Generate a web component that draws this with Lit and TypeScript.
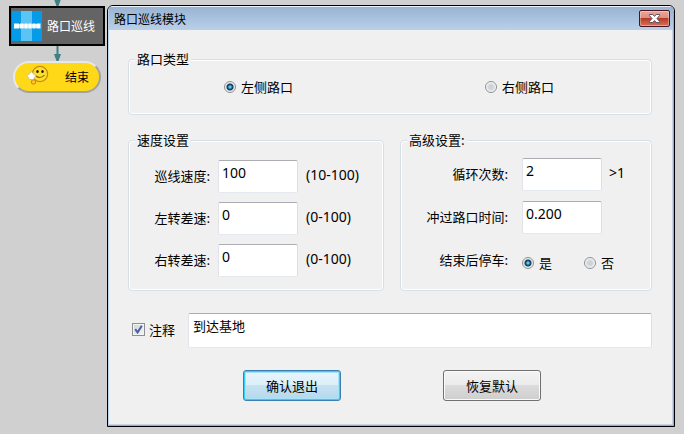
import { LitElement, html, css, svg } from "lit";
import { customElement, state } from "lit/decorators.js";

const sharedText = css`
  :host {
    font-family: "Noto Sans CJK SC", "Noto Sans", sans-serif;
    color: #000;
  }
`;

@customElement("flow-track")
export class FlowTrack extends LitElement {
  static styles = [
    sharedText,
    css`
      :host {
        display: flex;
        flex-direction: column;
        align-items: center;
        padding: 0 2px 0 9px;
        font-size: 12px;
        line-height: 16px;
      }
      svg {
        display: block;
      }
      .node {
        box-sizing: border-box;
        align-self: stretch;
        display: flex;
        align-items: center;
        gap: 5px;
        height: 40px;
        padding: 0 1px;
        border: 2px solid #000;
        background: #646464;
        color: #fff;
        white-space: nowrap;
      }
      .end {
        box-sizing: border-box;
        display: flex;
        align-items: center;
        gap: 16px;
        width: 88px;
        height: 32px;
        padding: 0 0 0 12px;
        border: 2px solid;
        border-color: #e8e8e8 #a2a2a2 #a2a2a2 #e8e8e8;
        border-radius: 16px;
        background: #ffd817;
      }
      .face {
        margin-bottom: 5px;
      }
    `,
  ];

  private arrow(height: number) {
    return svg`<svg width="9" height=${height} viewBox=${`0 ${16 - height} 9 ${height}`} aria-hidden="true">
      <path d="M4.5 0V10" stroke="#3f8080" stroke-width="2" />
      <path d="M1 9H8L5.5 16H3.5Z" fill="#3f8080" />
    </svg>`;
  }

  render() {
    return html`
      ${this.arrow(6)}
      <div class="node">
        <svg width="30" height="30" viewBox="0 0 30 30" aria-hidden="true">
          <path fill="#069be8" d="M0 0H30V30H0Z" />
          <path fill="#5cc4f2" d="M9 0H20V30H9Z" />
          <path fill="#c4eafa" d="M2 13H28V17H2Z" />
          <path
            fill="#fff"
            d="M2 12.5H7V17.5H2ZM8 12.5H11.5V17.5H8ZM12.5 12.5H15.5V17.5H12.5ZM16.5 12.5H19.5V17.5H16.5ZM20.5 12.5H23.5V17.5H20.5ZM24.5 12.5H28.5V17.5H24.5Z"
          />
        </svg>
        <span>路口巡线</span>
      </div>
      ${this.arrow(15)}
      <div class="end">
        <svg class="face" width="22" height="20" viewBox="0 0 22 20" aria-hidden="true">
          <circle cx="13" cy="9" r="7.6" fill="#fddf2a" stroke="#c58a1a" stroke-width="1.3" />
          <ellipse cx="10.5" cy="6.5" rx="1.2" ry="1.5" fill="#1c1400" />
          <ellipse cx="15.5" cy="6.5" rx="1.2" ry="1.5" fill="#1c1400" />
          <path d="M9 11Q13.5 14.5 17.5 10" fill="none" stroke="#8a5a00" stroke-width="1.1" />
          <circle cx="6.5" cy="17" r="2.2" fill="#ffc51a" stroke="#c58a1a" />
          <path d="M0 10.5L3 8.5L4.5 6.5L6.5 9L8.5 11L6.5 14.5L2.5 14.5Z" fill="#fff" stroke="#b9a98c" stroke-width="0.6" />
        </svg>
        <span>结束</span>
      </div>
    `;
  }
}

@customElement("module-dialog")
export class ModuleDialog extends LitElement {
  @state() private side = "left";
  @state() private stop = "yes";

  static styles = [
    sharedText,
    css`
      :host {
        display: block;
        font-size: 13px;
        line-height: 20px;
      }
      .window {
        border: 1px solid #000;
        border-radius: 6px 6px 0 0;
        overflow: hidden;
        background: #f0f0f0;
      }
      .frame {
        border: 1px solid;
        border-color: #e8f2fb #4cc9e8 #4cc9e8 #b9d1ea;
        border-radius: 5px 5px 0 0;
      }
      .title-bar {
        display: flex;
        align-items: center;
        justify-content: space-between;
        height: 23px;
        padding: 0 3px 0 5px;
        background: linear-gradient(#98b3d2, #b9d0ea);
      }
      .title {
        margin: 0;
        font-size: 12px;
        font-weight: 400;
      }
      .close {
        display: grid;
        place-items: center;
        box-sizing: border-box;
        width: 31px;
        height: 17px;
        padding: 0;
        border: 1px solid #4a1423;
        border-radius: 2px;
        background: linear-gradient(#eaa698, #dc8f80 45%, #b93a24 50%, #d4735c);
        box-shadow: inset 0 0 0 1px #ffffff55;
      }
      .body {
        padding: 19px 20px 23px 19px;
        border: solid #c9d3e6;
        border-width: 0 1px 1px 0;
      }
      fieldset {
        min-width: 0;
        margin: 0;
        padding: 0;
        border: 1px solid #d5dfe5;
        border-radius: 4px;
        box-shadow: inset 0 0 0 1px #fff;
      }
      legend {
        height: 20px;
        margin-left: 6px;
        padding: 0 2px;
        background: #f0f0f0;
      }
      .sides {
        display: grid;
        grid-template-columns: 1fr 1fr;
        height: 45px;
      }
      .sides .choice {
        height: 36px;
        padding-left: 95px;
      }
      .groups {
        display: grid;
        grid-template-columns: 64fr 63fr;
        gap: 16px;
        margin-top: 15px;
      }
      .rows {
        display: grid;
        align-items: center;
        grid-auto-rows: 33px;
      }
      .speed {
        grid-template-columns: 81px 80px 1fr;
        gap: 9px 8px;
        padding: 10px 0 13px;
      }
      .advanced {
        grid-template-columns: 107px 80px 1fr;
        gap: 10px 14px;
        padding: 8px 0 13px;
      }
      .name {
        text-align: right;
        white-space: nowrap;
        padding-bottom: 2px;
      }
      .hint,
      .value {
        font-family: "Noto Sans", "Noto Sans CJK SC", sans-serif;
        font-size: 14px;
      }
      .hint {
        padding-bottom: 4px;
      }
      .advanced .hint {
        margin-left: -7px;
      }
      .value,
      .note {
        box-sizing: border-box;
        width: 100%;
        margin: 0;
        border: 1px solid;
        border-color: #abadb3 #dbdfe6 #e3e9ef #e2e3ea;
        border-radius: 2px;
        background: #fff;
        color: #000;
        outline: none;
      }
      .value {
        height: 33px;
        padding: 0 3px 8px;
      }
      .choice {
        display: flex;
        align-items: center;
        gap: 5px;
      }
      .stops {
        display: flex;
        grid-column: 2 / -1;
        gap: 32px;
        padding-top: 4px;
      }
      .radio,
      .check {
        appearance: none;
        box-sizing: border-box;
        flex: none;
        width: 12px;
        height: 12px;
        margin: 0;
        border: 1px solid #8e8f8f;
      }
      .radio {
        border-radius: 50%;
        background: radial-gradient(circle, #cfd2d6 0 2px, #e6e8ea 4px, #fff 5px);
      }
      .radio:checked {
        background: radial-gradient(circle, #5fc5ee 0 1px, #18608f 2px, #12384f 3px, #dfe5e8 4px, #f4f4f4 5px);
      }
      .check-box {
        display: grid;
      }
      .check,
      .tick {
        grid-area: 1 / 1;
      }
      .check {
        width: 13px;
        height: 13px;
        background: linear-gradient(135deg, #cfd3d9, #f6f6f6);
        box-shadow: inset 0 0 0 1px #f4f4f4;
      }
      .tick {
        pointer-events: none;
        visibility: hidden;
      }
      .check:checked + .tick {
        visibility: visible;
      }
      .remark {
        display: flex;
        align-items: center;
        gap: 13px;
        margin-top: 22px;
      }
      .remark .choice {
        flex: none;
        gap: 4px;
        padding: 0 0 2px 4px;
      }
      .note {
        flex: 1;
        min-width: 0;
        height: 35px;
        padding: 2px 4px;
        font: inherit;
        resize: none;
      }
      .actions {
        display: flex;
        justify-content: center;
        gap: 102px;
        margin-top: 22px;
        padding-left: 4px;
      }
      .action {
        box-sizing: border-box;
        width: 98px;
        height: 31px;
        padding: 0;
        border: 1px solid #707070;
        border-radius: 3px;
        background: linear-gradient(#f3f3f3, #ebebeb 49%, #dcdcdc 50%, #cecece);
        box-shadow: inset 0 0 0 1px #fafafa;
        color: #000;
        font: inherit;
      }
      .primary {
        border-color: #3c7fb1;
        background: linear-gradient(#e9f4fb, #dceff9 49%, #c6e2f1 50%, #b4d8ec);
        box-shadow: inset 0 0 0 1px #38cdf6, inset 0 0 0 2px #a5e3fa;
      }
    `,
  ];

  private speeds = [
    { id: "line", label: "巡线速度:", value: "100", hint: "(10-100)" },
    { id: "left", label: "左转差速:", value: "0", hint: "(0-100)" },
    { id: "right", label: "右转差速:", value: "0", hint: "(0-100)" },
  ];

  private radio(group: "side" | "stop", value: string, label: string) {
    return html`<label class="choice">
      <input
        class="radio"
        type="radio"
        name=${group}
        value=${value}
        .checked=${this[group] === value}
        @change=${() => (this[group] = value)}
      />${label}
    </label>`;
  }

  render() {
    return html`
      <section class="window" role="dialog" aria-labelledby="title">
        <div class="frame">
          <header class="title-bar">
            <h1 class="title" id="title">路口巡线模块</h1>
            <button class="close" type="button" aria-label="关闭">
              <svg width="13" height="11" viewBox="0 0 13 11" aria-hidden="true">
                <path
                  d="M1.5 1.5H4.8L6.5 3.4L8.2 1.5H11.5V2.6L9 5.5L11.5 8.4V9.5H8.2L6.5 7.6L4.8 9.5H1.5V8.4L4 5.5L1.5 2.6Z"
                  fill="#fff"
                  stroke="#5a5566"
                  stroke-width="1"
                />
              </svg>
            </button>
          </header>
          <form class="body" @submit=${(e: Event) => e.preventDefault()}>
            <fieldset>
              <legend>路口类型</legend>
              <div class="sides">
                ${this.radio("side", "left", "左侧路口")} ${this.radio("side", "right", "右侧路口")}
              </div>
            </fieldset>
            <div class="groups">
              <fieldset>
                <legend>速度设置</legend>
                <div class="rows speed">
                  ${this.speeds.map(
                    (s) => html`
                      <label class="name" for=${s.id}>${s.label}</label>
                      <input class="value" id=${s.id} type="text" .value=${s.value} />
                      <span class="hint">${s.hint}</span>
                    `
                  )}
                </div>
              </fieldset>
              <fieldset>
                <legend>高级设置:</legend>
                <div class="rows advanced">
                  <label class="name" for="loops">循环次数:</label>
                  <input class="value" id="loops" type="text" .value=${"2"} />
                  <span class="hint">&gt;1</span>
                  <label class="name" for="pass">冲过路口时间:</label>
                  <input class="value" id="pass" type="text" .value=${"0.200"} />
                  <span></span>
                  <span class="name" id="stop-name">结束后停车:</span>
                  <div class="stops" role="radiogroup" aria-labelledby="stop-name">
                    ${this.radio("stop", "yes", "是")} ${this.radio("stop", "no", "否")}
                  </div>
                </div>
              </fieldset>
            </div>
            <div class="remark">
              <label class="choice">
                <span class="check-box">
                  <input class="check" type="checkbox" checked />
                  <svg class="tick" width="13" height="13" viewBox="0 0 13 13" aria-hidden="true">
                    <path d="M3.2 6.2L5.6 9.4L9.8 2.8" fill="none" stroke="#4a5fa5" stroke-width="2" />
                  </svg>
                </span>
                注释
              </label>
              <textarea class="note" aria-label="注释" .value=${"到达基地"}></textarea>
            </div>
            <div class="actions">
              <button class="action primary" type="submit">确认退出</button>
              <button class="action" type="reset">恢复默认</button>
            </div>
          </form>
        </div>
      </section>
    `;
  }
}

@customElement("app-root")
export class AppRoot extends LitElement {
  static styles = css`
    :host {
      display: grid;
      grid-template-columns: 107px 1fr;
      align-items: start;
      box-sizing: border-box;
      min-height: 100vh;
      background: #d0d0d0;
    }
    .dialog {
      margin: 5px 9px 7px 0;
    }
  `;

  render() {
    return html`
      <flow-track></flow-track>
      <module-dialog class="dialog"></module-dialog>
    `;
  }
}
